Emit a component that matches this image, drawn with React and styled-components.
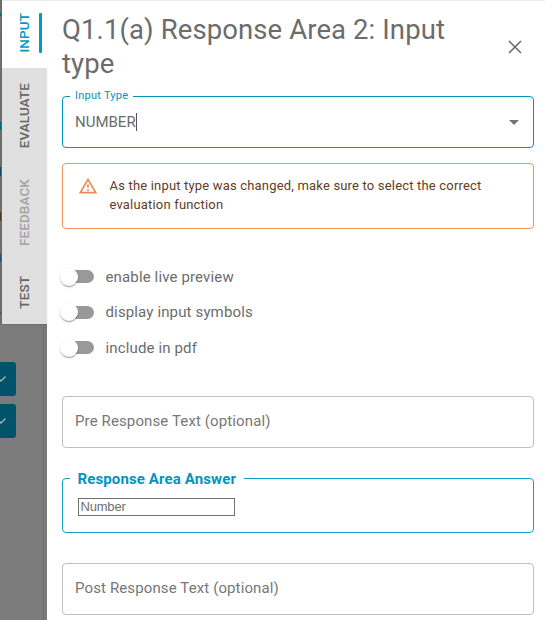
import React from 'react';
import styled, { createGlobalStyle } from 'styled-components';

const GlobalStyle = createGlobalStyle`
  * { box-sizing: border-box; }
  body { margin: 0; background: #fff; font-family: Roboto, sans-serif; overflow: hidden; }
`;

const Screen = styled.div`
  display: flex;
  width: 545px;
  height: 620px;
  overflow: hidden;
  color: #6c6c6c;
`;

const Side = styled.aside`
  position: relative;
  display: flex;
  flex-direction: column;
  width: 47px;
  flex: none;
  background: linear-gradient(90deg, #7b7b7b 43px, #717171 43px, #717171 44px, #797979 44px);
`;

const Fragment = styled.span`
  position: absolute;
  left: 0;
  top: ${(p) => p.$top}px;
  width: 1px;
  height: ${(p) => p.$height}px;
  background: ${(p) => p.$color};
`;

const Tabs = styled.nav`
  position: relative;
  display: flex;
  flex-direction: column;
  margin-left: 2px;
  height: 324px;
  background: #e0e0e0;
  box-shadow: -1px 0 2px rgba(0, 0, 0, 0.25);
`;

const Tab = styled.button`
  display: flex;
  align-items: center;
  justify-content: center;
  position: relative;
  width: 45px;
  height: ${(p) => p.$height}px;
  padding: 0 1px ${(p) => (p.$active ? 3 : 1)}px 0;
  border: 0;
  background: ${(p) => (p.$active ? '#fff' : 'transparent')};
  border-top: ${(p) => (p.$active ? '1px solid #ebebeb' : '0')};
  color: ${(p) => (p.$active ? '#009ac3' : p.$disabled ? '#a2a2a2' : '#666')};
  font: 500 13.5px/20px Roboto, sans-serif;
  letter-spacing: 0.1px;
`;

const TabText = styled.span`
  writing-mode: vertical-rl;
  transform: rotate(180deg);
`;

const Indicator = styled.span`
  position: absolute;
  right: 5px;
  top: 12px;
  width: 3px;
  height: 40px;
  border-radius: 1px;
  background: #009ac3;
`;

const Actions = styled.div`
  display: flex;
  flex-direction: column;
  gap: 8px;
  padding-top: 38px;
`;

const Action = styled.div`
  display: flex;
  align-items: center;
  width: 16px;
  height: 34px;
  border-radius: 0 3px 3px 0;
  background: #00536a;
`;

const Panel = styled.main`
  flex: 1;
  display: flex;
  flex-direction: column;
  padding: 12px 11px 0 15px;
  background: #fff;
  border-top: 1px solid #ebebeb;
`;

const Header = styled.header`
  display: flex;
  align-items: center;
  justify-content: space-between;
  height: 68px;
  padding-right: 10px;
`;

const Title = styled.h1`
  width: 410px;
  margin: 0;
  font-size: 27.5px;
  font-weight: 400;
  line-height: 34px;
  letter-spacing: 0.1px;
`;

const Field = styled.fieldset`
  width: 472px;
  min-width: 0;
  height: ${(p) => p.$height || 52}px;
  margin: ${(p) => p.$gap}px 0 0;
  padding: ${(p) => p.$pad || '0 12px'};
  border: 1px solid ${(p) => p.$color || '#c0c0c0'};
  border-radius: 4px;
`;

const FieldRow = styled.div`
  display: flex;
  align-items: center;
  height: ${(p) => p.$height || 50}px;
`;

const FieldLegend = styled.legend`
  height: ${(p) => (p.$strong ? 18 : 12)}px;
  margin-left: ${(p) => (p.$strong ? -8 : -5)}px;
  padding: 0 ${(p) => (p.$strong ? 7.5 : 5)}px;
  color: #0095c0;
  font-size: ${(p) => (p.$strong ? 15 : 11)}px;
  font-weight: ${(p) => (p.$strong ? 700 : 400)};
  line-height: ${(p) => (p.$strong ? 20 : 12)}px;
  letter-spacing: ${(p) => (p.$strong ? 0.12 : 0.25)}px;
`;

const Value = styled.span`
  flex: 1;
  display: flex;
  align-items: center;
  font-size: 15px;
  line-height: 20px;
  letter-spacing: ${(p) => (p.$tight ? 0 : 0.12)}px;
  color: ${(p) => (p.$tight ? '#6c6c6c' : '#777')};
`;

const Caret = styled.span`
  width: 1px;
  height: 18px;
  background: #555;
`;

const Alert = styled.section`
  display: flex;
  height: 66px;
  margin-top: 15px;
  padding: 12px 16px 12px 15px;
  border: 1px solid #ee965f;
  border-radius: 4px;
  color: #5f3d25;
  font-size: 13px;
  line-height: 19px;
  letter-spacing: 0.18px;
`;

const AlertText = styled.div`
  width: 390px;
  margin-left: 11.5px;
`;

const Toggles = styled.div`
  display: flex;
  flex-direction: column;
  margin-top: 30px;
`;

const Toggle = styled.label`
  display: flex;
  align-items: center;
  height: 35.5px;
  font-size: 15px;
  letter-spacing: 0.14px;
`;

const Track = styled.span`
  display: flex;
  align-items: center;
  width: 30px;
  height: 13px;
  margin: 0 11.5px 0 2px;
  border-radius: 7px;
  background: #999;
`;

const Thumb = styled.span`
  flex: none;
  width: 18px;
  height: 18px;
  margin-left: -4px;
  border-radius: 50%;
  background: #fff;
  box-shadow: 0 2px 1px -1px rgba(0,0,0,.2), 0 1px 1px rgba(0,0,0,.14), 0 1px 3px rgba(0,0,0,.12);
`;

const NumberInput = styled.input`
  width: 157px;
  height: 18px;
  padding: 1px 1.5px 2px;
  border: 1px solid #707070;
  border-radius: 0;
  font: 13px "Liberation Sans", Arial, sans-serif;
  letter-spacing: -0.2px;
  &::placeholder { color: #707070; opacity: 1; }
`;

const fragments = [
  [13, 3, '#00657f'], [36, 1, '#666'], [122, 8, '#00657f'], [167, 9, '#174863'],
  [212, 9, '#493818'], [254, 8, '#27506d'], [312, 2, '#31566a'],
];

function Check() {
  return (
    <svg width="16" height="16" viewBox="0 0 16 16">
      <path d="M-2 7L1 10L5.5 5.5" fill="none" stroke="#aab7bb" strokeWidth="1.3" />
    </svg>
  );
}

export default function App() {
  return (
    <>
      <GlobalStyle />
      <Screen>
        <Side>
          <Tabs>
            <Tab $height={68} $active><TabText>INPUT</TabText><Indicator /></Tab>
            <Tab $height={97}><TabText>EVALUATE</TabText></Tab>
            <Tab $height={96} $disabled><TabText>FEEDBACK</TabText></Tab>
            <Tab $height={63}><TabText>TEST</TabText></Tab>
          </Tabs>
          {fragments.map(([top, height, color]) => (
            <Fragment key={top} $top={top} $height={height} $color={color} />
          ))}
          <Actions>
            <Action><Check /></Action>
            <Action><Check /></Action>
          </Actions>
        </Side>
        <Panel>
          <Header>
            <Title>Q1.1(a) Response Area 2: Input type</Title>
            <svg width="18" height="18" viewBox="0 0 18 18">
              <path d="M3 3L15 15M15 3L3 15" stroke="#6c6c6c" strokeWidth="1.6" />
            </svg>
          </Header>
          <Field $gap={9} $height={58} $color="#0095c0" $pad="0 14px 0 12px">
            <FieldLegend>Input Type</FieldLegend>
            <FieldRow $height={40}>
              <Value $tight>NUMBER<Caret /></Value>
              <svg width="10" height="5" viewBox="0 0 10 5"><path d="M0 0h10L5 5z" fill="#757575" /></svg>
            </FieldRow>
          </Field>
          <Alert>
            <svg width="20" height="20" viewBox="0 0 24 24" fill="#e98b56">
              <path d="M12 5.99L19.53 19H4.47L12 5.99M12 2L1 21h22L12 2zm1 14h-2v2h2v-2zm0-6h-2v4h2v-4z" />
            </svg>
            <AlertText>As the input type was changed, make sure to select the correct evaluation function</AlertText>
          </Alert>
          <Toggles>
            {['enable live preview', 'display input symbols', 'include in pdf'].map((label) => (
              <Toggle key={label}><Track><Thumb /></Track>{label}</Toggle>
            ))}
          </Toggles>
          <Field $gap={30.5}><FieldRow $height={48}><Value>Pre Response Text (optional)</Value></FieldRow></Field>
          <Field $gap={21} $height={64} $color="#149fc8" $pad="0 15px">
            <FieldLegend $strong>Response Area Answer</FieldLegend>
            <FieldRow $height={39}><NumberInput placeholder="Number" /></FieldRow>
          </Field>
          <Field $gap={30}><FieldRow $height={48}><Value>Post Response Text (optional)</Value></FieldRow></Field>
        </Panel>
      </Screen>
    </>
  );
}
